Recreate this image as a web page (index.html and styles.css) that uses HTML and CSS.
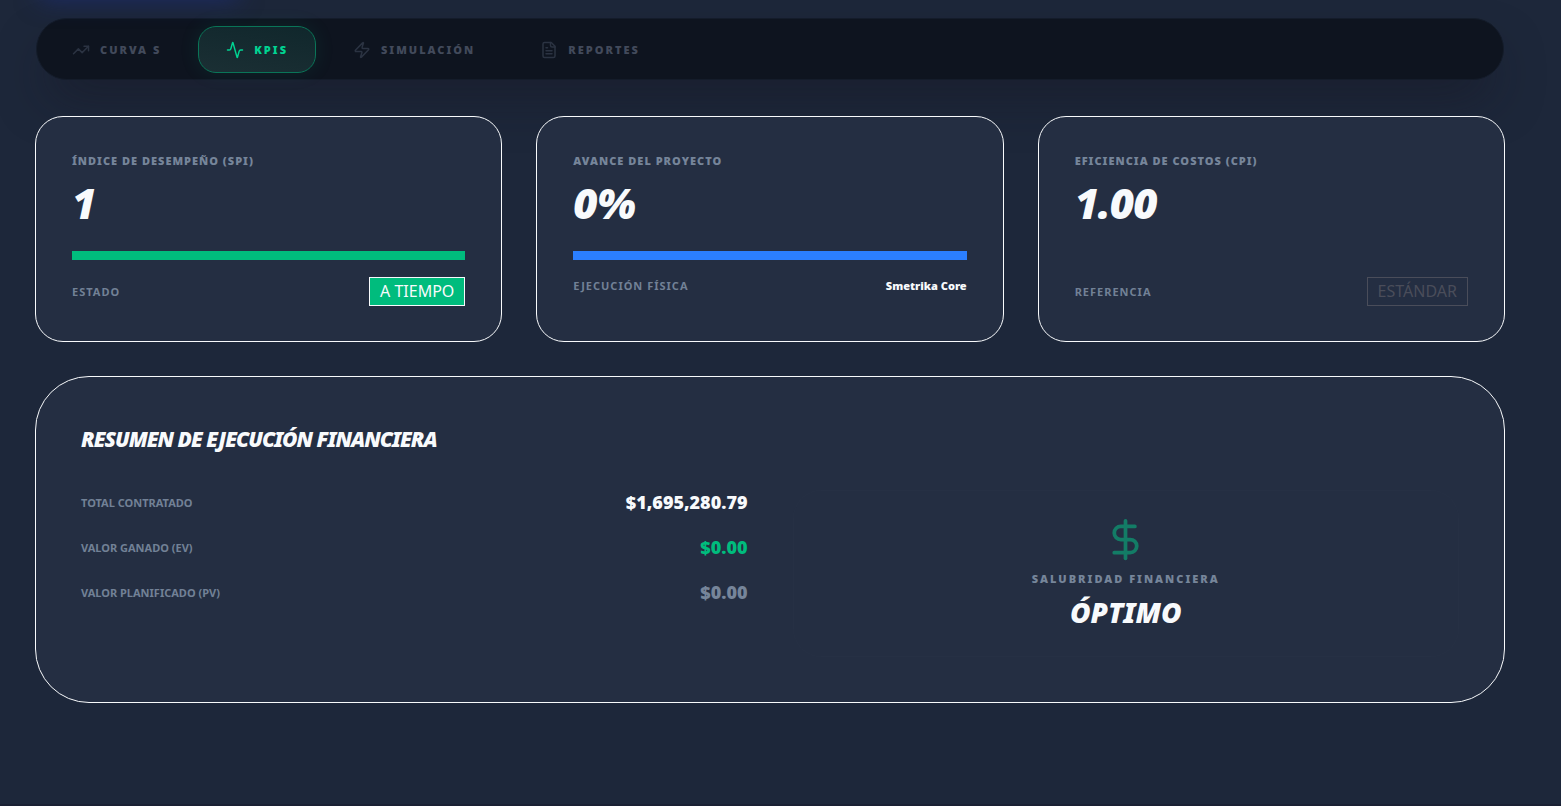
FILE: index.html
```
<!DOCTYPE html>
<html lang="es">
<head>
  <meta charset="UTF-8" />
  <meta name="viewport" content="width=device-width, initial-scale=1.0"/>
  <title>Smetrika - KPIs</title>
  <link rel="stylesheet" href="styles.css">
</head>
<body>
  <div class="glow"></div>

  <nav class="tabs">
    <button class="tab" type="button">
      <svg class="icon" viewBox="0 0 24 24"><path d="M16 7h6v6"/><path d="m22 7-8.5 8.5-5-5L2 17"/></svg>
      Curva S
    </button>
    <button class="tab active" type="button">
      <svg class="icon" viewBox="0 0 24 24"><path d="M22 12h-2.48a2 2 0 0 0-1.93 1.46l-2.35 8.36a.25.25 0 0 1-.48 0L9.24 2.18a.25.25 0 0 0-.48 0l-2.35 8.36A2 2 0 0 1 4.49 12H2"/></svg>
      KPIs
    </button>
    <button class="tab" type="button">
      <svg class="icon" viewBox="0 0 24 24"><path d="M4 14a1 1 0 0 1-.78-1.63l9.9-10.2a.5.5 0 0 1 .86.46l-1.92 6.02A1 1 0 0 0 13 10h7a1 1 0 0 1 .78 1.63l-9.9 10.2a.5.5 0 0 1-.86-.46l1.92-6.02A1 1 0 0 0 11 14z"/></svg>
      Simulación
    </button>
    <button class="tab" type="button">
      <svg class="icon" viewBox="0 0 24 24"><path d="M15 2H6a2 2 0 0 0-2 2v16a2 2 0 0 0 2 2h12a2 2 0 0 0 2-2V7z"/><path d="M14 2v4a2 2 0 0 0 2 2h4"/><path d="M10 9H8"/><path d="M16 13H8"/><path d="M16 17H8"/></svg>
      Reportes
    </button>
  </nav>

  <main>
    <section class="cards">
      <article class="card">
        <h3 class="card-label">Índice de Desempeño (SPI)</h3>
        <p class="card-value">1</p>
        <div class="bar bar-green"></div>
        <div class="card-foot">
          <span class="foot-label">Estado</span>
          <span class="badge badge-green">A TIEMPO</span>
        </div>
      </article>

      <article class="card">
        <h3 class="card-label">Avance del Proyecto</h3>
        <p class="card-value">0%</p>
        <div class="bar bar-blue"></div>
        <div class="card-foot">
          <span class="foot-label">Ejecución Física</span>
          <span class="foot-value">Smetrika Core</span>
        </div>
      </article>

      <article class="card">
        <h3 class="card-label">Eficiencia de Costos (CPI)</h3>
        <p class="card-value">1.00</p>
        <div class="bar"></div>
        <div class="card-foot">
          <span class="foot-label">Referencia</span>
          <span class="badge">ESTÁNDAR</span>
        </div>
      </article>
    </section>

    <section class="summary">
      <h2>Resumen de Ejecución Financiera</h2>
      <div class="summary-grid">
        <dl class="totals">
          <div class="total">
            <dt>Total Contratado</dt>
            <dd>$1,695,280.79</dd>
          </div>
          <div class="total">
            <dt>Valor Ganado (EV)</dt>
            <dd class="earned">$0.00</dd>
          </div>
          <div class="total">
            <dt>Valor Planificado (PV)</dt>
            <dd class="planned">$0.00</dd>
          </div>
        </dl>
        <div class="health">
          <svg class="health-icon" viewBox="0 0 24 24"><path d="M12 2v20"/><path d="M17 5H9.5a3.5 3.5 0 0 0 0 7h5a3.5 3.5 0 0 1 0 7H6"/></svg>
          <p class="health-label">Salubridad Financiera</p>
          <p class="health-value">Óptimo</p>
        </div>
      </div>
    </section>
  </main>
</body>
</html>
```
FILE: styles.css
```
* {
  box-sizing: border-box;
}
body {
  margin: 0;
  min-height: 100vh;
  padding: 18px 56px 0 35px;
  background: #1d273a;
  border-bottom: 2px solid #1a2033;
  color: #f8fafc;
  font-family: 'Segoe UI', 'Noto Sans', 'Open Sans', sans-serif;
  overflow-x: hidden;
}
h2, h3, p, dl, dd {
  margin: 0;
}

/* blue light behind the top left corner */
.glow {
  position: absolute;
  top: -50px;
  left: 40px;
  width: 198px;
  height: 50px;
  box-shadow: 0 0 24px rgba(30, 50, 150, 0.5);
}

.tabs {
  display: flex;
  gap: 9px;
  margin: 0 1px 36px;
  padding: 7px 7px 6px;
  background: #0e141f;
  border: 1px solid #141c2a;
  border-radius: 36px;
  box-shadow: 0 25px 50px -12px rgba(20, 18, 28, 0.5);
}
.tab {
  display: flex;
  align-items: center;
  gap: 10px;
  height: 47px;
  padding: 0 27px;
  background: none;
  border: 1px solid transparent;
  border-radius: 18px;
  color: #424a5b;
  font-family: inherit;
  font-size: 11px;
  font-weight: 900;
  letter-spacing: 2px;
  line-height: 18px;
  text-transform: uppercase;
  cursor: pointer;
}
.tab.active {
  background: linear-gradient(10deg, #1b2f34, #10272c);
  border-color: #0a7558;
  color: #00d492;
  box-shadow: 0 0 20px rgba(0, 188, 125, 0.1);
}
.icon {
  width: 18px;
  height: 18px;
  fill: none;
  stroke: #2b3342;
  stroke-width: 2;
  stroke-linecap: round;
  stroke-linejoin: round;
}
.active .icon {
  stroke: currentColor;
}

.cards {
  display: grid;
  grid-template-columns: repeat(3, 1fr);
  gap: 34px;
  margin-bottom: 34px;
}
.card {
  padding: 35px 36px;
  background: #242e42;
  border: 1px solid #f8fafc;
  border-radius: 28px;
}
.card-label, .foot-label, .foot-value {
  font-size: 11px;
  line-height: 18px;
}
.card-label {
  color: #76859a;
  font-weight: 900;
  letter-spacing: 1px;
  text-transform: uppercase;
}
.card-value {
  margin: 10px 0 26px;
  font-size: 42px;
  font-style: italic;
  font-weight: 900;
  line-height: 45px;
  letter-spacing: -1px;
}
.bar {
  height: 9px;
  margin-bottom: 17px;
}
.bar-green {
  background: #00bc7d;
}
.bar-blue {
  background: #2b7fff;
}
.card-foot {
  display: flex;
  justify-content: space-between;
}
.foot-label {
  align-self: center;
  color: #728196;
  font-weight: 700;
  letter-spacing: 1px;
  text-transform: uppercase;
}
.foot-value {
  font-weight: 900;
}
.badge {
  padding: 0 10px;
  border: 1px solid #4a4d5a;
  color: #4a4d5a;
  font-size: 16px;
  line-height: 27px;
}
.badge-green {
  background: #00bc7d;
  border-color: #f8fafc;
  color: #f8fafc;
}

.summary {
  padding: 45px;
  background: #242e42;
  border: 1px solid #f8fafc;
  border-radius: 54px;
}
.summary h2 {
  margin-bottom: 34px;
  font-size: 21px;
  font-style: italic;
  font-weight: 900;
  line-height: 34px;
  letter-spacing: -1px;
  text-transform: uppercase;
}
.summary-grid {
  display: grid;
  grid-template-columns: 1fr 1fr;
  gap: 45px;
}
.totals {
  display: flex;
  flex-direction: column;
  gap: 20px;
}
.total {
  display: flex;
  justify-content: space-between;
  align-items: center;
  line-height: 25px;
}
.total dt {
  color: #728196;
  font-size: 11px;
  font-weight: 700;
  text-transform: uppercase;
}
.total dd {
  font-size: 18px;
  font-weight: 900;
}
.total .earned {
  color: #00bc7d;
}
.total .planned {
  color: #76859a;
}
.health {
  display: flex;
  flex-direction: column;
  align-items: center;
  padding: 26px;
  border: 1px solid #263044;
  border-radius: 28px;
}
.health-icon {
  width: 45px;
  height: 45px;
  margin-bottom: 8px;
  fill: none;
  stroke: #137c66;
  stroke-width: 2;
  stroke-linecap: round;
  stroke-linejoin: round;
}
.health-label {
  color: #76859a;
  font-size: 11px;
  font-weight: 900;
  line-height: 18px;
  letter-spacing: 2px;
  text-transform: uppercase;
}
.health-value {
  margin-top: 6px;
  font-size: 28px;
  font-style: italic;
  font-weight: 900;
  line-height: 36px;
  text-transform: uppercase;
}
```
